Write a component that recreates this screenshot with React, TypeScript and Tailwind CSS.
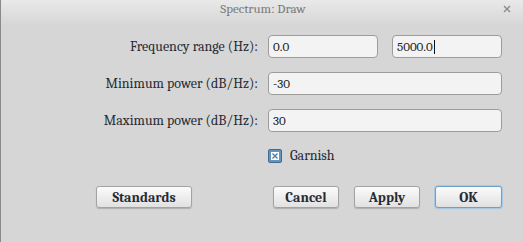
import React from "react";

const Field = ({ value, caret = false, className = "" }: { value: string; caret?: boolean; className?: string }) => (
  <div
    className={`h-[23px] rounded-[4px] border border-[#9c9c9c] bg-[#f3f3f3] px-[4px] flex items-center text-[13px] text-[#222] ${className}`}
  >
    <span>{value}</span>
    {caret && <span className="ml-[1px] inline-block w-px h-[14px] bg-[#111]"></span>}
  </div>
);

const Button = ({ children, width, focused = false }: { children: React.ReactNode; width: string; focused?: boolean }) => (
  <button
    className={`${width} h-[22px] rounded-[3px] border ${
      focused ? "border-[#6d9fcb] ring-1 ring-[#a9c8e4]" : "border-[#a3a3a3]"
    } bg-gradient-to-b from-[#fbfbfb] to-[#e1e1e1] shadow-[0_1px_1px_rgba(0,0,0,0.18)] font-serif [font-family:'Liberation_Serif',serif] text-[14px] font-bold text-[#262a33] flex items-center justify-center`}
  >
    {children}
  </button>
);

const App = () => {
  return (
    <div className="w-[523px] h-[242px] bg-[#d6d6d6] border-l border-[#8a8a8a] flex flex-col font-serif [font-family:'Liberation_Serif',serif]">
      {/* Title bar */}
      <div className="h-[24px] bg-gradient-to-b from-[#e9e9e9] to-[#d7d7d7] flex items-center relative">
        <div className="flex-1 text-center text-[13px] text-[#7a7a7a] pl-[2px] -mt-[6px]">Spectrum: Draw</div>
        <svg className="absolute right-[12px] top-[5px]" width="8" height="8" viewBox="0 0 8 8">
          <path d="M1 1L7 7M7 1L1 7" stroke="#8a8a8a" strokeWidth="1.4" />
        </svg>
      </div>

      {/* Form */}
      <div className="grid grid-cols-[257px_234px] gap-x-[10px] gap-y-[14px] mt-[11px] text-[14px] text-[#262a33]">
        <div className="text-right self-center">Frequency range (Hz):</div>
        <div className="flex gap-[14px]">
          <Field value="0.0" className="w-[110px]" />
          <Field value="5000.0" caret className="w-[110px]" />
        </div>
        <div className="text-right self-center">Minimum power (dB/Hz):</div>
        <Field value="-30" />
        <div className="text-right self-center">Maximum power (dB/Hz):</div>
        <Field value="30" />
        <div></div>
        <div className="flex items-center gap-[8px] -mt-[1px]">
          <div className="w-[14px] h-[14px] rounded-[2px] border border-[#46698a] bg-[#6396bf] flex items-center justify-center">
            <div className="w-[8px] h-[8px] bg-white flex items-center justify-center">
              <svg width="6" height="6" viewBox="0 0 6 6">
                <path d="M0.5 0.5L5.5 5.5M5.5 0.5L0.5 5.5" stroke="#4f7fa6" strokeWidth="1.4" />
              </svg>
            </div>
          </div>
          <span>Garnish</span>
        </div>
      </div>

      {/* Buttons */}
      <div className="flex items-center mt-[20px] pl-[95px] pr-[21px]">
        <Button width="w-[96px]">Standards</Button>
        <div className="flex-1"></div>
        <div className="flex gap-[15px]">
          <Button width="w-[66px]">Cancel</Button>
          <Button width="w-[66px]">Apply</Button>
          <Button width="w-[67px]" focused>
            OK
          </Button>
        </div>
      </div>
    </div>
  );
};

export default App;
